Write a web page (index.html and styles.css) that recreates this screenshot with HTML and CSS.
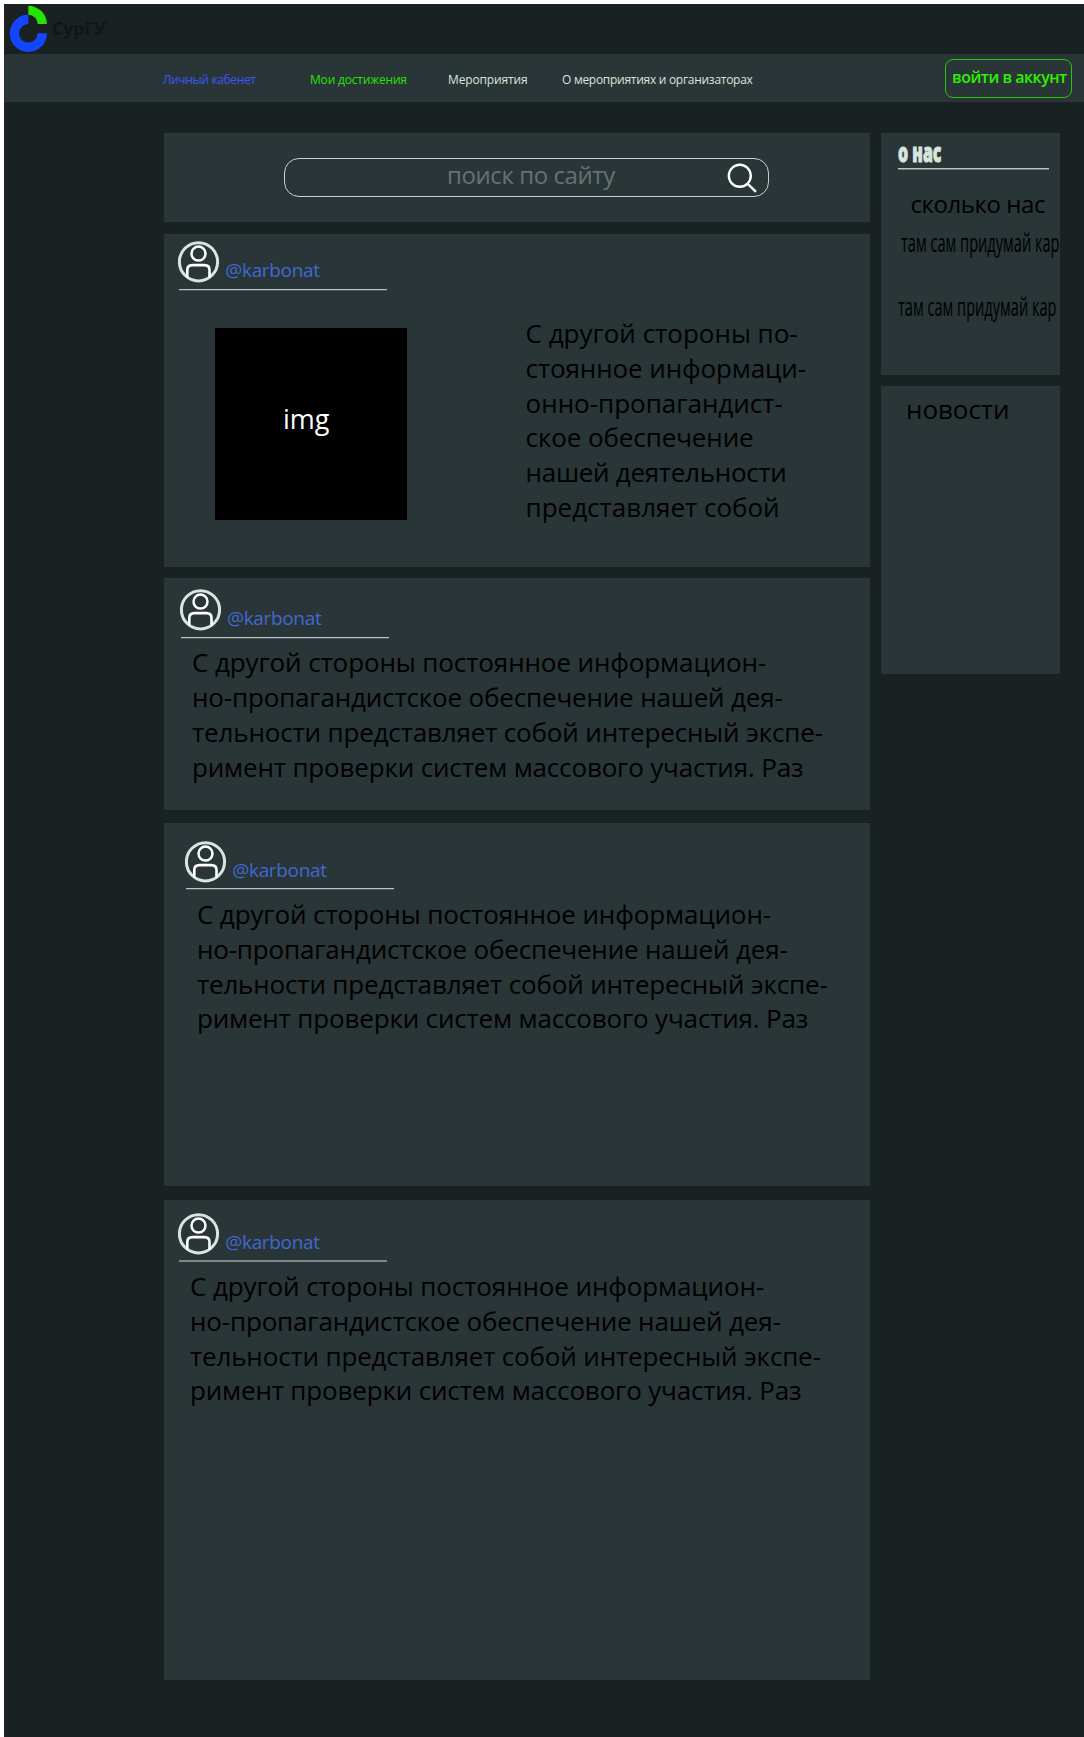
FILE: index.html
```
<!DOCTYPE html>
<html lang="ru">
<head>
<meta charset="utf-8">
<title>СурГУ</title>
<link rel="stylesheet" href="styles.css">
</head>
<body>
<svg class="sprite" aria-hidden="true">
  <symbol id="avatar" viewBox="0 0 42 42">
    <circle cx="20.5" cy="20.8" r="19.1" fill="none" stroke="#d8e5df" stroke-width="3"/>
    <circle cx="20.5" cy="12.6" r="7" fill="none" stroke="#fff" stroke-width="2.5"/>
    <path d="M9.3 36.5V29Q9.3 24.1 14.4 24.1H26.4Q31.5 24.1 31.5 29V36.5" fill="none" stroke="#fff" stroke-width="2.6"/>
  </symbol>
</svg>
<div class="page">
  <header class="top">
    <svg class="logo" width="44" height="50" viewBox="0 0 44 50">
      <path d="M24.3 10.7A18.6 18.6 0 1 0 42.9 29.3H33.6A9.3 9.3 0 1 1 24.3 20Z" fill="#1546ff"/>
      <path d="M24.3 1.8A18.4 18.2 0 0 1 42.9 20H33.8A9.4 9.2 0 0 0 24.3 10.8Z" fill="#27e300"/>
    </svg>
    <span class="brand">СурГУ</span>
  </header>
  <nav class="nav">
    <a class="link link-cabinet">Личный кабенет</a>
    <a class="link link-awards">Мои достижения</a>
    <a class="link link-events">Мероприятия</a>
    <a class="link link-about">О мероприятиях и организаторах</a>
    <a class="login">войти в аккунт</a>
  </nav>
  <div class="layout">
    <main class="feed">
      <section class="card search-card">
        <div class="search">
          <span class="placeholder">поиск по сайту</span>
          <svg width="32" height="32" viewBox="0 0 32 32" fill="none" stroke="#fff">
            <circle cx="12.8" cy="12.8" r="11" stroke-width="2.4"/>
            <path d="M20.7 20.8L29 28.9" stroke-width="2.4"/>
          </svg>
        </div>
      </section>
      <article class="card post post-media">
        <div class="author"><svg class="avatar"><use href="#avatar"/></svg><span class="name">@karbonat</span></div>
        <div class="media">
          <div class="picture">img</div>
          <p class="text"><span class="n1">С другой стороны по-</span><span class="n2">стоянное информаци-</span><span class="n1">онно-пропагандист-</span><span class="n2">ское обеспечение</span><span class="n4">нашей деятельности</span><span class="n1">представляет собой</span></p>
        </div>
      </article>
      <article class="card post post-short">
        <div class="author"><svg class="avatar"><use href="#avatar"/></svg><span class="name">@karbonat</span></div>
        <p class="text"><span class="n2">С другой стороны постоянное информацион-</span><span class="n3">но-пропагандистское обеспечение нашей дея-</span><span class="n3">тельности представляет собой интересный экспе-</span><span class="n3">римент проверки систем массового участия. Раз</span></p>
      </article>
      <article class="card post post-middle">
        <div class="author"><svg class="avatar"><use href="#avatar"/></svg><span class="name">@karbonat</span></div>
        <p class="text"><span class="n2">С другой стороны постоянное информацион-</span><span class="n3">но-пропагандистское обеспечение нашей дея-</span><span class="n3">тельности представляет собой интересный экспе-</span><span class="n3">римент проверки систем массового участия. Раз</span></p>
      </article>
      <article class="card post post-long">
        <div class="author"><svg class="avatar"><use href="#avatar"/></svg><span class="name">@karbonat</span></div>
        <p class="text"><span class="n2">С другой стороны постоянное информацион-</span><span class="n3">но-пропагандистское обеспечение нашей дея-</span><span class="n3">тельности представляет собой интересный экспе-</span><span class="n3">римент проверки систем массового участия. Раз</span></p>
      </article>
    </main>
    <aside class="side">
      <section class="card about">
        <h2 class="about-title"><span>о нас</span></h2>
        <p class="count">сколько нас</p>
        <p class="note note-first"><span>там сам придумай кар</span></p>
        <p class="note"><span>там сам придумай кар</span></p>
      </section>
      <section class="card news">
        <h2 class="news-title">новости</h2>
      </section>
    </aside>
  </div>
</div>
</body>
</html>
```
FILE: styles.css
```
* { box-sizing: border-box; }
html { background: #fff; }
body {
  margin: 0;
  padding: 4px 0 0 4px;
  font-family: "Open Sans", "Noto Sans", sans-serif;
  color: #000;
}
p, h2 { margin: 0; font-weight: 400; }
.sprite { display: none; }
.page { min-height: 1733px; background: #1a2123; overflow: hidden; }

/* header */
.top { display: flex; height: 50px; }
.logo { display: block; }
.brand {
  margin-left: 4px;
  padding-top: 12px;
  font-size: 18px;
  font-weight: 700;
  line-height: 24px;
  letter-spacing: -0.3px;
  color: #111517;
}

/* navigation */
.nav { display: flex; height: 48px; background: #2a3537; }
.link {
  padding-top: 18px;
  font-size: 12px;
  line-height: 16px;
  white-space: nowrap;
  color: #d8e5df;
}
.link-cabinet { width: 147px; margin-left: 159px; letter-spacing: -0.36px; color: #3a58f5; }
.link-awards { width: 138px; letter-spacing: -0.18px; color: #27e300; }
.link-events { width: 114px; letter-spacing: -0.14px; }
.link-about { letter-spacing: -0.28px; }
.login {
  width: 127px;
  height: 39px;
  margin: 5px 12px 0 auto;
  padding: 6px 0 0 6px;
  border: 1px solid #27c50c;
  border-radius: 8px;
  font-size: 16px;
  font-weight: 600;
  line-height: 22px;
  letter-spacing: -0.5px;
  white-space: nowrap;
  color: #2df000;
}

/* columns */
.layout { display: flex; gap: 11px; padding: 31.4px 0 0 160px; }
.feed { width: 706.4px; }
.side { width: 178.6px; }
.card { background: #2a3537; }

/* search */
.search-card { height: 89px; padding: 24.6px 0 0 120px; }
.search {
  display: flex;
  justify-content: space-between;
  width: 485px;
  height: 39px;
  padding: 4px 9px 0 162px;
  border: 1px solid #c4d1cd;
  border-radius: 15px;
}
.placeholder {
  font-size: 24px;
  line-height: 24px;
  letter-spacing: -0.42px;
  color: #647273;
}

/* posts */
.author {
  display: flex;
  width: 208px;
  border-bottom: 1px solid #bac5c4;
  box-shadow: 0 1px #4c5658;
}
.avatar { width: 42px; height: 42px; margin-left: -1.4px; }
.name {
  margin-left: 5.4px;
  padding-top: 16px;
  font-size: 19px;
  line-height: 26px;
  letter-spacing: -0.34px;
  color: #4069d2;
}
.text { font-size: 26px; line-height: 34.9px; white-space: nowrap; }
.text span { display: block; }
.n1 { letter-spacing: -0.01px; }
.n2 { letter-spacing: -0.11px; }
.n3 { letter-spacing: -0.166px; }
.n4 { letter-spacing: -0.29px; }

.post-media { height: 333px; margin-top: 11.6px; padding: 7px 0 0 15.3px; }
.post-media .author { height: 49px; }
.media { display: flex; gap: 118.6px; padding: 38.4px 0 0 35.7px; }
.picture {
  width: 192px;
  height: 192px;
  padding: 73px 0 0 68px;
  background: #000;
  color: #fff;
  font-size: 27px;
  line-height: 36px;
}
.media .text { margin-top: -12.4px; line-height: 34.8px; }

.post-short { height: 232.3px; margin-top: 11px; padding: 11px 0 0 17px; }
.post-short .author { height: 49px; }
.post-short .text { margin: 7px 0 0 11px; }

.post-middle { height: 363px; margin-top: 12.7px; padding: 18px 0 0 22.3px; }
.post-middle .author { height: 48.5px; }
.post-middle .text { margin: 7.6px 0 0 10.6px; line-height: 34.8px; }

.post-long { height: 480px; margin-top: 14px; padding: 13px 0 0 15.3px; }
.post-long .author { height: 48px; border-color: #7d8789; box-shadow: 0 1px #7d8789; }
.post-long .text { margin: 7.8px 0 0 10.7px; }

/* sidebar */
.about { height: 241.8px; padding: 6.6px 0 0 17px; }
.about-title {
  width: 151px;
  height: 29px;
  border-bottom: 1px solid #bac5c4;
  box-shadow: 0 1px #6c7678;
  font-size: 27px;
  font-weight: 800;
  line-height: 24px;
  color: #d8e5df;
}
.about-title span, .note span {
  display: inline-block;
  transform-origin: 0 50%;
  white-space: nowrap;
}
.about-title span { transform: scaleX(0.59); -webkit-text-stroke: 1.1px #d8e5df; }
.count {
  margin: 17px 0 0 12px;
  font-size: 24px;
  line-height: 36px;
  letter-spacing: -0.42px;
  white-space: nowrap;
}
.note { height: 36px; font-size: 25px; line-height: 36px; }
.note span { width: 0; transform: scaleX(0.584); }
.note-first { margin: 1.6px 0 28px 3px; }
.news { height: 288px; margin-top: 10.7px; padding: 5px 0 0 24.6px; }
.news-title { font-size: 26px; line-height: 36px; letter-spacing: -0.06px; }
```
